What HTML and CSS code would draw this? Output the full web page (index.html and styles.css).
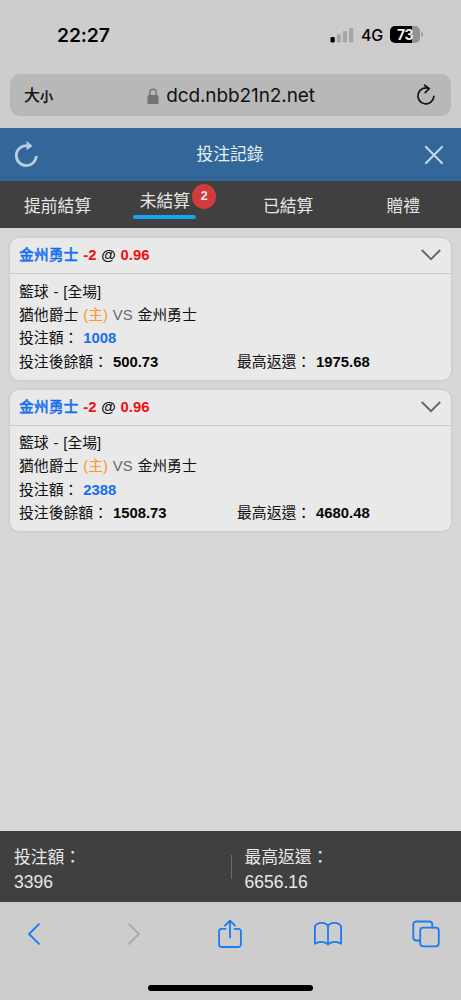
FILE: index.html
```
<!DOCTYPE html>
<html lang="zh-Hant">
<head>
<meta charset="utf-8">
<title>投注記錄</title>
<link rel="stylesheet" href="styles.css">
</head>
<body>
<div class="screen">
  <div class="status">
    <span class="clock">22:27</span>
    <svg class="signal" width="24" height="16" viewBox="0 0 24 16"><rect x="0.5" y="10" width="4.2" height="5.5" rx="1.2" fill="#000"/><rect x="6.8" y="7.2" width="4.2" height="8.3" rx="1.2" fill="#a6a6a6"/><rect x="12.8" y="4" width="4.2" height="11.5" rx="1.2" fill="#a6a6a6"/><rect x="19" y="1" width="4.2" height="14.5" rx="1.2" fill="#a6a6a6"/></svg>
    <span class="network">4G</span>
    <span class="battery">73</span>
    <span class="battery-cap"></span>
  </div>
  <div class="address">
    <span class="text-size">大<small>小</small></span>
    <div class="site">
      <svg width="12" height="17" viewBox="0 0 12 17"><path d="M2.8 7.5V4.6a3.2 3.4 0 0 1 6.4 0v2.9" fill="none" stroke="#737279" stroke-width="1.4"/><rect x="0.4" y="7" width="11.2" height="9" rx="1.6" fill="#737279"/></svg>
      <span>dcd.nbb21n2.net</span>
    </div>
    <svg class="reload" width="20" height="23" viewBox="0 0 20 23" fill="none" stroke="#111" stroke-width="1.7" stroke-linecap="round" stroke-linejoin="round"><path d="M13.3 4.6A8 8 0 1 0 17.9 12.3M8.6 1.2l4.6 3.5-4 4"/></svg>
  </div>
  <header class="title">
    <svg width="24" height="28" viewBox="0 0 24 28"><path d="M13 4.600A10 10 0 1 0 22.300 15" fill="none" stroke="#bacce0" stroke-width="2.800"/><path d="M12.600 0l6 5-6 4.200z" fill="#bacce0"/></svg>
    <h1>投注記錄</h1>
    <svg width="20" height="20" viewBox="0 0 20 20" fill="none" stroke="#c9d7e6" stroke-width="2"><path d="M1.3 1.3l17.4 17.4M18.7 1.3L1.3 18.7"/></svg>
  </header>
  <nav class="tabs">
    <span class="tab">提前結算</span>
    <span class="tab active"><span class="tab-label">未結算</span><b class="badge">2</b></span>
    <span class="tab">已結算</span>
    <span class="tab">贈禮</span>
  </nav>
  <main>
    <section class="card">
      <div class="card-head"><p><span class="blue">金州勇士</span> <span class="red">-2</span> @ <span class="red">0.96</span></p>
        <svg width="20" height="12" viewBox="0 0 20 12" fill="none" stroke="#666" stroke-width="1.9"><path d="M0.8 1L10 10.2 19.2 1"/></svg></div>
      <div class="card-body">
        <p>籃球 - [全場]</p>
        <p>猶他爵士 <span class="orange">(主)</span> <span class="gray">VS</span> 金州勇士</p>
        <p>投注額： <b class="blue">1008</b></p>
        <div class="pair"><p>投注後餘額： <b>500.73</b></p><p>最高返還： <b>1975.68</b></p></div>
      </div>
    </section>
    <section class="card">
      <div class="card-head"><p><span class="blue">金州勇士</span> <span class="red">-2</span> @ <span class="red">0.96</span></p>
        <svg width="20" height="12" viewBox="0 0 20 12" fill="none" stroke="#666" stroke-width="1.9"><path d="M0.8 1L10 10.2 19.2 1"/></svg></div>
      <div class="card-body">
        <p>籃球 - [全場]</p>
        <p>猶他爵士 <span class="orange">(主)</span> <span class="gray">VS</span> 金州勇士</p>
        <p>投注額： <b class="blue">2388</b></p>
        <div class="pair"><p>投注後餘額： <b>1508.73</b></p><p>最高返還： <b>4680.48</b></p></div>
      </div>
    </section>
  </main>
  <footer class="totals">
    <div class="total"><p>投注額：</p><p>3396</p></div>
    <div class="rule"></div>
    <div class="total"><p>最高返還：</p><p>6656.16</p></div>
  </footer>
  <div class="toolbar">
    <div class="tools">
      <svg width="28" height="24" viewBox="-7 0 28 24"><path d="M12 2.2L2 12l10 9.8"/></svg>
      <svg class="disabled" width="28" height="24" viewBox="-9 0 28 24"><path d="M2 2.2L12 12 2 21.8"/></svg>
      <svg width="28" height="32" viewBox="-1 0 28 32"><path d="M8.5 10.8H4.6a2.5 2.5 0 0 0-2.5 2.5v13.2A2.5 2.5 0 0 0 4.6 29h16.8a2.5 2.5 0 0 0 2.5-2.5V13.3a2.5 2.5 0 0 0-2.5-2.5h-3.9M13 19.6V3M8 7.5L13 2.6l5 4.900"/></svg>
      <svg width="28" height="26" viewBox="1 0 28 26"><path d="M15 5C13 .9 4.500 .6 1.900 5.200v17.600c4-2.800 10.100-2.400 13.100.6 3-3 9.100-3.400 13.100-.6V5.200C25.500 .6 17 .9 15 5zM15 5v18"/></svg>
      <svg width="28" height="28" viewBox="0 0 28 28"><rect x="8.200" y="7.700" width="18.600" height="18.600" rx="3"/><path d="M8.200 20.500H4.300a3 3 0 0 1-3-3V4.500a3 3 0 0 1 3-3h13a3 3 0 0 1 3 3v3.200"/></svg>
    </div>
    <div class="home"></div>
  </div>
</div>
</body>
</html>
```
FILE: styles.css
```
* { box-sizing: border-box; }
body, p, h1 { margin: 0; }
svg { display: block; flex: none; }
body { background: #cdcdcd; font-family: "Liberation Sans", "Noto Sans CJK TC", sans-serif; }
.screen { width: 461px; height: 1000px; display: flex; flex-direction: column; overflow: hidden; }

.status { height: 74px; padding: 0 38px 5px 57px; display: flex; align-items: center; font-family: Inter, sans-serif; color: #050505; }
.clock { font-size: 19.3px; font-weight: 600; margin-right: auto; letter-spacing: -0.1px; }
.signal { margin-right: 7px; }
.network { font-size: 16px; font-weight: 500; width: 22px; margin-right: 7px; letter-spacing: -0.2px; }
.battery { width: 30px; height: 17px; border-radius: 5px; background: linear-gradient(90deg, #000 73%, #929292 73%); color: #eee; font-size: 14px; font-weight: 700; line-height: 17px; text-align: center; letter-spacing: -0.5px; }
.battery-cap { width: 2px; height: 5px; margin-left: 1px; border-radius: 0 2px 2px 0; background: #a0a0a0; }

.address { flex: none; height: 42px; margin: 0 10px 12px; padding: 0 15px 0 14px; border-radius: 10px; background: #b8b8b8; display: grid; grid-template-columns: 40px 1fr 20px; align-items: center; color: #111; }
.text-size { font-family: "Noto Sans CJK TC", sans-serif; font-size: 16px; font-weight: 500; line-height: 24px; white-space: nowrap; }
.text-size small { font-size: 13px; -webkit-text-stroke: 0.3px #111; }
.site { display: flex; justify-content: center; align-items: center; gap: 7px; padding: 2px 18px 0 0; font-family: Inter, sans-serif; font-size: 19px; line-height: 24px; letter-spacing: -0.1px; }

.title { flex: none; height: 53px; padding: 0 17px 0 14px; background: #336699; display: flex; align-items: center; justify-content: space-between; color: #e7edf3; }
.title h1 { font-size: 16.8px; font-weight: 400; padding: 0 2px 3px 0; }

.tabs { flex: none; height: 47px; background: #404040; color: #e6e6e6; display: grid; grid-template-columns: repeat(4, 1fr); font-size: 16.8px; line-height: 24px; }
.tab { display: flex; align-items: center; justify-content: center; padding-top: 4px; }
.active { position: relative; align-items: flex-start; padding: 9px 16px 0 0; }
.tab-label { width: 63px; height: 29px; text-align: center; }
.tab-label::after { content: ""; display: block; height: 4px; margin-top: 1px; border-radius: 2px; background: #16a3ef; }
.badge { position: absolute; left: 77px; top: 3px; width: 24px; height: 25px; border-radius: 50%; background: #d33a3c; color: #f2eaea; font-size: 12.500px; line-height: 25px; text-align: center; }

main { flex: 1; background: #d7d7d7; padding: 10px 10px 0; display: flex; flex-direction: column; gap: 10px; }
.card { height: 141.500px; border-radius: 9px; background: #e9e9e9; box-shadow: 0 0 3px rgba(0, 0, 0, 0.12); font-size: 14.850px; line-height: 23.400px; word-spacing: 0.700px; color: #111; }
.card-head { height: 36px; padding: 1px 10px 0 9px; border-bottom: 1px solid #cbcbcb; display: flex; align-items: center; justify-content: space-between; font-weight: 700; }
.card-head svg { margin-bottom: 2px; }
.card-head .blue { font-weight: 500; -webkit-text-stroke: 0.35px #176fed; }
.card-body { padding: 6.500px 9px 0; }
.pair { display: grid; grid-template-columns: 218px 1fr; }
.card b { color: #080808; }
.card .blue { color: #176fed; }
.red { color: #f30d14; }
.orange { color: #f99a27; }
.gray { color: #686868; }

.totals { flex: none; height: 71px; background: #404040; color: #e8e8e8; padding: 0 14px; display: flex; align-items: center; font-size: 16.800px; line-height: 24px; }
.total { flex: none; width: 216px; padding-top: 6px; }
.total p + p { font-size: 17.500px; }
.rule { flex: none; width: 1px; height: 24px; background: #6c6c6c; margin: 0 13px 0 0.500px; }

.toolbar { flex: none; height: 98px; display: flex; flex-direction: column; align-items: center; justify-content: space-between; padding: 16px 0 9.500px; }
.tools { width: 100%; height: 32px; padding: 0 21px 0 20px; display: flex; justify-content: space-between; align-items: center; }
.tools svg { fill: none; stroke: #1b7cf0; stroke-width: 1.800; stroke-linecap: round; stroke-linejoin: round; }
.tools .disabled { stroke: #a9a9a9; }
.home { width: 165px; height: 6px; border-radius: 3px; background: #000; }
```
